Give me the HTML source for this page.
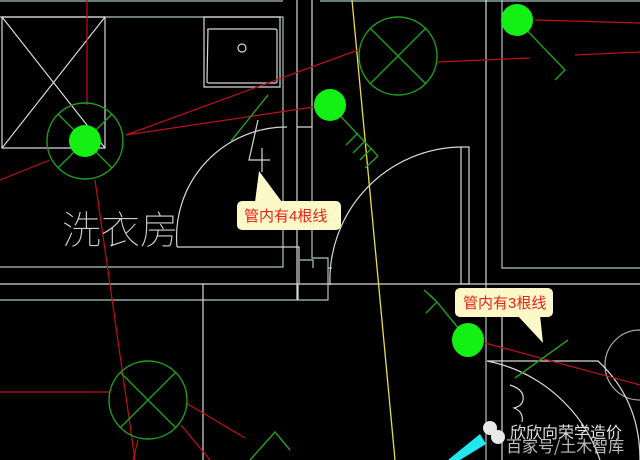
<!DOCTYPE html>
<html><head><meta charset="utf-8"><style>
html,body{margin:0;padding:0;background:#000;width:640px;height:460px;overflow:hidden}
svg{display:block}
.w{stroke:#d8d8d8;stroke-width:1.2;fill:none}
.g{stroke:#a9c8c0;stroke-width:1.2;fill:none}
.r{stroke:#c0101a;stroke-width:1.2;fill:none}
.gr{stroke:#1fa01f;stroke-width:1.4;fill:none}
.y{stroke:#e8e040;stroke-width:1.3;fill:none}
.lbl{font-family:"Liberation Sans","Noto Sans CJK SC",sans-serif;font-size:15px;fill:#e8201a}
</style></head><body>
<svg width="640" height="460" viewBox="0 0 640 460">
<!-- walls -->
<path class="g" d="M0 1H283M320 1H640"/>
<path class="g" d="M0 17H283V267H0"/>
<path class="w" d="M2 17H105V148H2Z M2 17L105 148 M105 17L2 148"/>
<path class="w" d="M204 17H280V87H204Z"/>
<path class="w" d="M208 30Q207 29 209 29H275Q277 29 277 31V81Q277 83 275 83H209Q207 83 207 81Z"/>
<circle class="w" cx="242" cy="48" r="4"/>
<path class="w" d="M297 0V300 M312 0V127H297"/>
<path class="g" d="M312 127V258H328V268H332"/>
<path class="w" d="M486 0V284"/>
<path class="g" d="M486 284V460"/>
<path class="g" d="M502 0V268H640"/>
<path class="w" d="M502 300V460"/>
<path class="w" d="M0 284H640"/>
<path class="g" d="M0 300H328V268"/>
<path class="w" d="M203 284V460 M298 284V300"/>
<path class="w" d="M177 247H299V284"/>
<path class="g" d="M300 260H313V268"/>
<!-- door arcs -->
<path class="w" d="M177 247A110 110 0 0 1 287 127"/>
<path class="w" d="M330 285A133 133 0 0 1 461 147"/>
<path class="w" d="M461 147H469V284H461Z"/>
<path class="w" d="M487 361H598Q640 400 640 460 M487 361A150 150 0 0 1 600 460"/>
<path class="w" d="M640 330A35 35 0 0 0 640 400" opacity="0.8"/>
<path class="w" d="M510 385Q525 390 523 400Q522 406 514 408Q524 412 522 422"/>
<!-- yellow -->
<path class="y" d="M352 0L395 460"/>
<!-- red wires -->
<path class="r" d="M87 0V105 M126 135L358 50 M126 135L320 106 M0 180L50 160 M95 180L135 460"/>
<path class="r" d="M438 62L530 58 M575 55L640 52 M535 20L640 23"/>
<path class="r" d="M485 343L640 385 M0 392H110 M186 403L245 438 M181 425L210 460 M138 440L133 460"/>
<!-- green lights -->
<g class="gr">
<circle cx="398" cy="56" r="39"/><path d="M370 28L426 84M426 28L370 84"/>
<circle cx="85" cy="141" r="38"/><path d="M58 114L112 168M112 114L58 168"/>
<circle cx="148" cy="400" r="39"/><path d="M120 372L176 428M176 372L120 428"/>
<path d="M330 105L378 156 M358 133L346 145M365 141L353 153M372 148L360 160M378 156L365 168"/>
<path d="M517 20L565 70L555 80"/>
<path d="M468 340L437 302L424 290 M437 302L426 313 M437 302L430 295"/>
<path d="M268 95L231 141"/>
<path d="M515 403L568 365" transform="translate(0,-25)"/>
<path d="M250 460L275 432L290 450"/>
</g>
<g fill="#14f014">
<circle cx="85" cy="141" r="16"/>
<circle cx="330" cy="105" r="16"/>
<circle cx="517" cy="20" r="16"/>
<ellipse cx="468" cy="340" rx="16" ry="17"/>
</g>
<!-- "4" -->
<path class="w" d="M258 120L249 160H270 M262 148V172"/>
<!-- room label -->
<text x="62" y="244" font-family="'Noto Sans CJK SC',sans-serif" font-size="39" font-weight="100" fill="#d0d0d0">洗衣房</text>
<!-- callout 1 -->
<path d="M259 171L282 202H255Z" fill="#fdf8c8"/>
<rect x="237" y="201" width="104" height="29" rx="5" fill="#fdf8c8"/>
<text class="lbl" x="244" y="221">管内有4根线</text>
<!-- callout 2 -->
<path d="M543 343L517 315H540Z" fill="#fdf8c8"/>
<rect x="455" y="288" width="98" height="29" rx="5" fill="#fdf8c8"/>
<text class="lbl" x="463" y="308">管内有3根线</text>
<!-- watermark -->
<path d="M448 460L480 434L486 444L460 460Z" fill="#20e8f0"/>
<circle cx="490" cy="428" r="7" fill="#e8e8e8"/>
<circle cx="498" cy="437" r="7" fill="#e8e8e8"/>
<text x="510" y="438" font-family="'Noto Sans CJK SC',sans-serif" font-size="16" fill="#e0e0e0">欣欣向荣学造价</text>
<text x="506" y="452" font-family="'Noto Sans CJK SC',sans-serif" font-size="16" fill="#e0e0e0" opacity="0.85">百家号/土木智库</text>
</svg>
</body></html>
